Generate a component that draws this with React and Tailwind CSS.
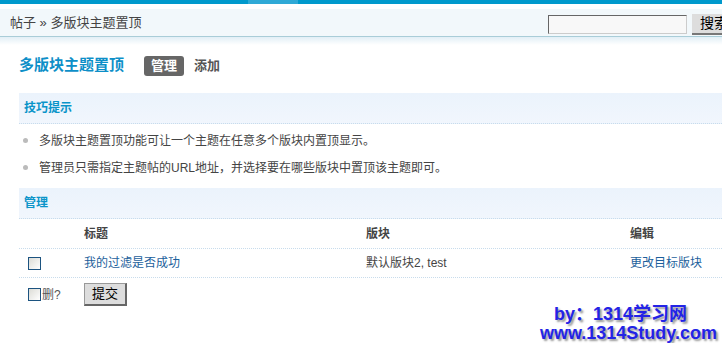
import React from 'react';

const Check = () => (
  <span className="inline-block w-[13px] h-[13px] border border-[#1c5380] bg-gradient-to-br from-[#dcdcd6] to-white"></span>
);

const SectionHead = ({ children }) => (
  <div className="h-[31px] flex items-center pl-[5px] bg-gradient-to-b from-[#ebf3fc] to-[#f1f6fd] border-b border-dotted border-[#c8dcec] text-[12px] font-bold text-[#0a94c9]">
    {children}
  </div>
);

const App = () => {
  return (
    <div
      className="relative w-[722px] h-[343px] overflow-hidden bg-white text-[12px] text-[#444]"
      style={{ fontFamily: '"Liberation Sans", "Noto Sans CJK SC", sans-serif' }}
    >
      <div className="w-[740px]">
        {/* Top strip */}
        <div className="h-[4px] bg-[#0099cc] flex">
          <div className="w-[248px]"></div>
          <div className="w-[50px] bg-[#2fa9d6]"></div>
        </div>
        <div className="h-[5px]"></div>

        {/* Breadcrumb bar */}
        <div className="h-[28px] bg-[#f2f8fb] border-b border-[#a9cdd8] flex items-center justify-between pl-[10px]">
          <span className="text-[#444] text-[13px]">帖子 » 多版块主题置顶</span>
          <div className="flex items-center gap-[5px] pt-[3px]">
            <input
              className="w-[139px] h-[19px] bg-[#f8f8f8] border border-t-[#666] border-l-[#666] border-b-[#ccc] border-r-[#ccc] outline-none"
              type="text"
            />
            <button className="w-[48px] h-[21px] bg-[#ddd] border-b-2 border-r-2 border-[#777] text-[14px] text-black text-left pl-[8px] leading-none">
              搜索
            </button>
          </div>
        </div>
        <div className="h-[8px] bg-gradient-to-b from-[#e2eff6] to-white"></div>

        {/* Page title */}
        <div className="flex items-center h-[21px] mt-[10px] pl-[19px]">
          <h1 className="text-[15px] font-bold text-[#0d8fc8] w-[125px]">多版块主题置顶</h1>
          <span className="bg-[#666] text-white font-bold text-[13px] px-[7px] h-[20px] leading-[20px] rounded-[3px]">管理</span>
          <span className="ml-[10px] text-[#555] font-bold text-[13px]">添加</span>
        </div>

        <div className="ml-[19px] mt-[17px]">
          <SectionHead>技巧提示</SectionHead>
          <ul className="pt-[3px]">
            <li className="h-[27px] flex items-center">
              <span className="w-[5px] h-[5px] rounded-full bg-[#bbb] ml-[4px] mr-[11px]"></span>
              多版块主题置顶功能可让一个主题在任意多个版块内置顶显示。
            </li>
            <li className="h-[27px] flex items-center">
              <span className="w-[5px] h-[5px] rounded-full bg-[#bbb] ml-[4px] mr-[11px]"></span>
              管理员只需指定主题帖的URL地址，并选择要在哪些版块中置顶该主题即可。
            </li>
          </ul>

          <div className="mt-[7px]">
            <SectionHead>管理</SectionHead>
          </div>
          <div className="grid grid-cols-[65px_282px_264px_1fr] h-[30px] items-center border-b border-dotted border-[#c8dcec] font-bold text-[#444]">
            <span></span>
            <span>标题</span>
            <span>版块</span>
            <span>编辑</span>
          </div>
          <div className="grid grid-cols-[65px_282px_264px_1fr] h-[29px] items-center border-b border-dotted border-[#c8dcec]">
            <span className="pl-[9px] flex"><Check /></span>
            <span className="text-[#1d5f9c]">我的过滤是否成功</span>
            <span className="text-[#444]">默认版块2, test</span>
            <span className="text-[#1d5f9c]">更改目标版块</span>
          </div>
          <div className="grid grid-cols-[65px_1fr] h-[33px] items-center">
            <span className="pl-[9px] flex items-center gap-[1px] text-[#555]"><Check />删?</span>
            <span>
              <button className="w-[43px] h-[23px] bg-[#ddd] border border-[#999] border-b-2 border-r-2 border-b-[#666] border-r-[#666] text-black text-[13px]">提交</button>
            </span>
          </div>
        </div>
      </div>

      {/* Watermark */}
      <div
        className="absolute right-[5px] bottom-0 text-right font-bold text-[18px] leading-[19px] text-[#2323e6]"
        style={{ textShadow: '2px 2px 2px #999' }}
      >
        <div className="pr-[30px]">by：1314学习网</div>
        <div>www.1314Study.com</div>
      </div>
    </div>
  );
};

export default App;
